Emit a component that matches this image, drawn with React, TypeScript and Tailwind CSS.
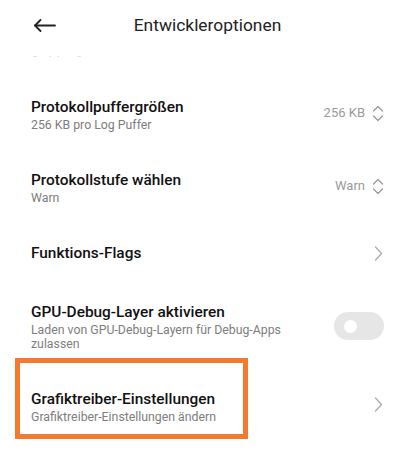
import React from "react";

const font = { fontFamily: "Roboto, 'Noto Sans', sans-serif" };

function UpDown() {
  return (
    <svg width="12" height="17" viewBox="0 0 12 17" fill="none" stroke="#9a9a9a" strokeWidth="1.3" strokeLinecap="round" strokeLinejoin="round">
      <path d="M1.5 6 L6 1.5 L10.5 6" />
      <path d="M1.5 11 L6 15.5 L10.5 11" />
    </svg>
  );
}

function Chevron() {
  return (
    <svg width="9" height="15" viewBox="0 0 9 15" fill="none" stroke="#acacac" strokeWidth="1.3" strokeLinecap="round" strokeLinejoin="round">
      <path d="M1.5 1 L7.5 7.5 L1.5 14" />
    </svg>
  );
}

function Row({ title, sub, right, extra }: { title: string; sub?: React.ReactNode; right?: React.ReactNode; extra?: React.ReactNode }) {
  return (
    <div className="relative flex items-center justify-between pl-[31px] pr-[31px] pt-[19px] pb-[18px]">
      {extra}
      <div className="flex flex-col">
        <div className="text-[15.4px] leading-[22px] font-medium text-[#111]">{title}</div>
        {sub && <div className="text-[12.3px] leading-[14px] text-[#7d7d7d]">{sub}</div>}
      </div>
      {right}
    </div>
  );
}

export default function App() {
  return (
    <div className="w-[415px] h-[450px] bg-white overflow-hidden" style={font}>
      <div className="h-[50px] flex items-center relative">
        <div className="absolute left-[34px] top-[19px]">
          <svg width="22" height="13" viewBox="0 0 22 13" fill="none" stroke="#222" strokeWidth="1.8" strokeLinecap="round" strokeLinejoin="round">
            <path d="M1 6.5 H21" />
            <path d="M6.5 1 L1 6.5 L6.5 12" />
          </svg>
        </div>
        <div className="w-full text-center text-[17.4px] text-[#222] pl-[0px]">Entwickleroptionen</div>
      </div>
      <div className="h-[27px] flex items-start gap-[6px] pl-[33px] pt-[6px]">
        <span className="w-[4px] h-[1px] bg-[#e4e4e4]" />
        <span className="w-[2px] h-[1px] bg-[#e4e4e4] ml-[6px]" />
        <span className="w-[2px] h-[1px] bg-[#e4e4e4]" />
        <span className="w-[4px] h-[1px] bg-[#e4e4e4] ml-[12px]" />
      </div>
      <Row
        title="Protokollpuffergrößen"
        sub="256 KB pro Log Puffer"
        right={
          <div className="flex items-center gap-[7px] mt-[-2px]">
            <span className="text-[13px] text-[#9a9a9a]">256 KB</span>
            <UpDown />
          </div>
        }
      />
      <Row
        title="Protokollstufe wählen"
        sub="Warn"
        right={
          <div className="flex items-center gap-[7px] mt-[-2px]">
            <span className="text-[13px] text-[#9a9a9a]">Warn</span>
            <UpDown />
          </div>
        }
      />
      <Row title="Funktions-Flags" right={<div className="mr-[1px]"><Chevron /></div>} />
      <Row
        title="GPU-Debug-Layer aktivieren"
        sub={<>Laden von GPU-Debug-Layern für Debug-Apps<br />zulassen</>}
        right={
          <div className="w-[50px] h-[28px] rounded-full bg-[#e6e6e6] flex items-center pl-[10px]">
            <div className="w-[13px] h-[13px] rounded-full bg-white" />
          </div>
        }
      />
      <Row
        title="Grafiktreiber-Einstellungen"
        sub="Grafiktreiber-Einstellungen ändern"
        right={<div className="mr-[1px] mt-[-4px]"><Chevron /></div>}
        extra={<div className="absolute left-[15px] top-[-11px] w-[233px] h-[81px] border-[5px] border-[#f47a2e]" />}
      />
    </div>
  );
}
